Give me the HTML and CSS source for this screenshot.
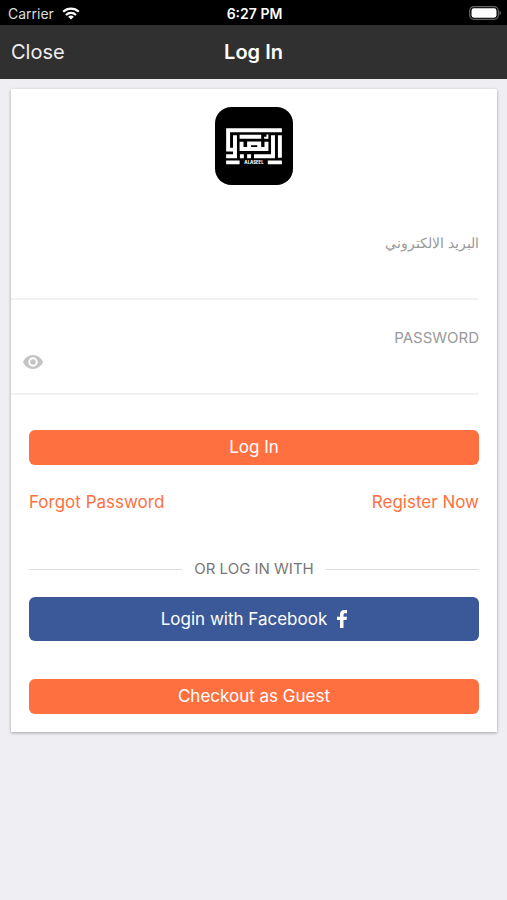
FILE: index.html
```html
<!DOCTYPE html>
<html lang="en">
<head>
<meta charset="utf-8">
<meta name="viewport" content="width=device-width, initial-scale=1">
<title>Log In</title>
<link rel="stylesheet" href="styles.css">
</head>
<body>
<div class="status">
  <div class="carrier">
    <span>Carrier</span>
    <svg class="wifi" viewBox="0 0 18 13" aria-hidden="true">
      <path d="M1.2 4.8a11.3 11.3 0 0 1 15.6 0" fill="none" stroke="#fff" stroke-width="2.2"/>
      <path d="M4 7.9a7.2 7.2 0 0 1 10 0" fill="none" stroke="#fff" stroke-width="2.1"/>
      <path d="M9 12.6 6.2 9.8a4 4 0 0 1 5.6 0z" fill="#fff"/>
    </svg>
  </div>
  <span class="time">6:27 PM</span>
  <svg class="battery" viewBox="0 0 32 14" aria-hidden="true">
    <rect x=".7" y=".7" width="28.6" height="12.6" rx="4" fill="none" stroke="#666" stroke-width="1.2"/>
    <rect x="2.5" y="2.3" width="25" height="9.4" rx="2.4" fill="#fff"/>
    <path d="M30.5 4.8q1.5.6 1.5 2.2t-1.5 2.2z" fill="#666"/>
  </svg>
</div>
<header class="navbar">
  <button class="close" type="button">Close</button>
  <h1>Log In</h1>
</header>
<main class="card">
  <svg class="logo" viewBox="31 31 238 238" role="img" aria-label="Alaseel">
    <rect x="31" y="31" width="238" height="238" rx="50" fill="#000"/>
    <g fill="none" stroke="#fff" stroke-width="12">
      <path d="M235 102H71v59h21M92 117v64H65"/>
      <path d="M106 122h66M112 137v22h76v-22M135 159v-17h31v17"/>
      <path d="M229 117v69M208 117v64h-58"/>
      <path d="M65 200h41M192 200h43"/>
      <path d="M107 181h12M129 181h12"/>
      <path d="M191 115v10h-10" stroke-width="6"/>
    </g>
    <text class="logo-text" x="150" y="205" text-anchor="middle">ALASEEL</text>
  </svg>
  <form class="form">
    <div class="field">
      <label for="email" lang="ar" dir="rtl">البريد الالكتروني</label>
      <input id="email" type="email" dir="rtl">
    </div>
    <div class="field">
      <label for="password">PASSWORD</label>
      <div class="entry">
        <button class="reveal" type="button" aria-label="Show password">
          <svg viewBox="0 0 20 14" aria-hidden="true">
            <path fill="#c4c4c4" fill-rule="evenodd" d="M10 0C5.500 0 1.600 2.900 0 7c1.600 4.100 5.500 7 10 7s8.400-2.900 10-7c-1.600-4.100-5.500-7-10-7zm0 11.700a4.700 4.700 0 1 1 0-9.400 4.700 4.700 0 0 1 0 9.400zM10 4.200a2.800 2.800 0 1 0 0 5.600 2.800 2.800 0 0 0 0-5.600z"/>
          </svg>
        </button>
        <input id="password" type="password" dir="rtl">
      </div>
    </div>
    <div class="actions">
      <button class="button" type="submit">Log In</button>
      <div class="links">
        <a href="#forgot">Forgot Password</a>
        <a href="#register">Register Now</a>
      </div>
      <div class="divider"><span>OR LOG IN WITH</span></div>
      <button class="button facebook" type="button">
        Login with Facebook
        <svg viewBox="0 0 10 18" aria-hidden="true">
          <path fill="#fff" d="M3 18V10H0V6.700h3V4.500C3 1.500 4.600 0 7.300 0H10v3.200H8C6.900 3.200 6.500 3.800 6.500 4.700v2H10L9.500 10h-3v8z"/>
        </svg>
      </button>
      <button class="button" type="button">Checkout as Guest</button>
    </div>
  </form>
</main>
</body>
</html>
```

FILE: styles.css
```css
* {
  box-sizing: border-box;
}

body {
  margin: 0;
  min-height: 100vh;
  background: #efeef3;
  color: #fff;
  font-family: Inter, "Liberation Sans", sans-serif;
}

button,
input {
  border: 0;
  padding: 0;
  background: none;
  color: inherit;
  font: inherit;
}

.status {
  display: grid;
  grid-template-columns: 1fr auto 1fr;
  align-items: center;
  height: 25px;
  padding: 1px 6px 0 8px;
  background: #000;
  font-size: 14px;
}

.carrier {
  display: flex;
  align-items: center;
  gap: 8px;
  color: #ddd;
}

.wifi {
  width: 18px;
  height: 13px;
}

.time {
  font-weight: 600;
}

.battery {
  width: 32px;
  height: 14px;
  justify-self: end;
}

.navbar {
  display: grid;
  grid-template-columns: 1fr auto 1fr;
  align-items: center;
  height: 54px;
  padding: 0 11px;
  background: #303030;
}

.close {
  justify-self: start;
  color: #eee;
  font-size: 20px;
}

h1 {
  margin: 0;
  font-size: 20px;
  font-weight: 600;
}

.card {
  margin: 10px 10px 0 11px;
  padding: 18px 0;
  background: #fff;
  box-shadow: 0 1px 3px #0005;
}

.logo {
  display: block;
  width: 78px;
  height: 78px;
  margin: 0 auto 40px;
}

.logo-text {
  fill: #fff;
  font-size: 13px;
  font-weight: 800;
}

.form {
  margin-right: 18px;
}

.field {
  display: flex;
  flex-direction: column;
  height: 95px;
  padding-top: 28px;
  border-bottom: 2px solid #f1f1f3;
  color: #999;
  font-size: 15px;
  line-height: 20px;
}

.field:first-child {
  height: 75px;
  padding-top: 8px;
  font-size: 14px;
}

.field label {
  align-self: flex-end;
}

.field input {
  width: 100%;
  height: 28px;
  outline: 0;
}

.entry {
  display: flex;
  align-items: center;
  padding-left: 12px;
}

.reveal {
  flex: none;
  width: 20px;
  height: 14px;
}

.reveal svg {
  display: block;
}

.actions {
  padding: 35px 0 0 18px;
}

.button {
  display: flex;
  align-items: center;
  justify-content: center;
  gap: 10px;
  width: 100%;
  height: 35px;
  padding-bottom: 1px;
  border-radius: 6px;
  background: #ff7040;
  font-size: 17px;
}

.links {
  display: flex;
  justify-content: space-between;
  margin: 25px 0 45px;
  font-size: 17px;
  line-height: 24px;
}

.links a {
  color: #ff7040;
  text-decoration: none;
}

.divider {
  display: flex;
  align-items: center;
  gap: 12px;
  margin-bottom: 18px;
  color: #777;
  font-size: 15px;
  line-height: 20px;
}

.divider::before,
.divider::after {
  content: "";
  flex: 1;
  height: 1px;
  background: #ddd;
}

.facebook {
  height: 44px;
  margin-bottom: 38px;
  background: #3b5998;
}

.facebook svg {
  width: 10px;
  height: 18px;
}
```
